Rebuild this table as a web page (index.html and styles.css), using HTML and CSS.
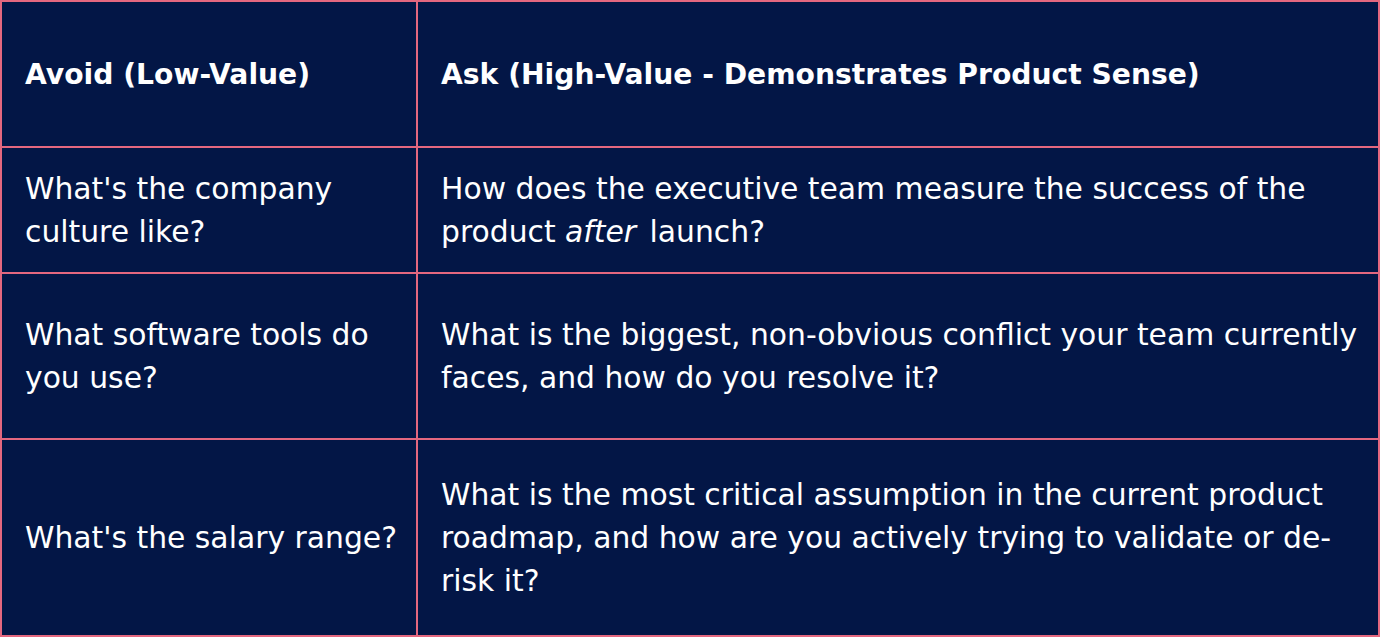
FILE: index.html
```html
<!DOCTYPE html>
<html lang="en">
<head>
<meta charset="utf-8">
<title>Questions to ask</title>
<link rel="stylesheet" href="styles.css">
</head>
<body>
<table class="qtable">
  <colgroup>
    <col class="col-avoid">
    <col class="col-ask">
  </colgroup>
  <thead>
    <tr class="row-head">
      <th>Avoid (Low-Value)</th>
      <th>Ask (High-Value - Demonstrates Product Sense)</th>
    </tr>
  </thead>
  <tbody>
    <tr class="row-1">
      <td>What's the company<br>culture like?</td>
      <td>How does the executive team measure the success of the<br>product <em>after</em> launch?</td>
    </tr>
    <tr class="row-2">
      <td>What software tools do<br>you use?</td>
      <td>What is the biggest, non-obvious conflict your team currently<br>faces, and how do you resolve it?</td>
    </tr>
    <tr class="row-3">
      <td>What's the salary range?</td>
      <td>What is the most critical assumption in the current product<br>roadmap, and how are you actively trying to validate or de-<br>risk it?</td>
    </tr>
  </tbody>
</table>
</body>
</html>
```
FILE: styles.css
```css
html, body {
  margin: 0;
  padding: 0;
  background: #ffffff;
}
.qtable {
  width: 1380px;
  border-collapse: collapse;
  table-layout: fixed;
  background: #031646;
  color: #ffffff;
  font-family: "DejaVu Sans", "Liberation Sans", sans-serif;
  font-size: 29.8px;
  line-height: 43px;
}
.col-avoid { width: 416px; }
.qtable th,
.qtable td {
  border: 2px solid #e4677f;
  padding: 0 10px 0 23px;
  text-align: left;
  vertical-align: middle;
  white-space: nowrap;
}
.qtable th {
  font-weight: 700;
  font-size: 28.2px;
}
.qtable em {
  font-style: italic;
  margin-right: 4px;
}
.row-head { height: 146px; }
.row-1 { height: 126px; }
.row-2 { height: 166px; }
.row-3 { height: 197px; }
```
